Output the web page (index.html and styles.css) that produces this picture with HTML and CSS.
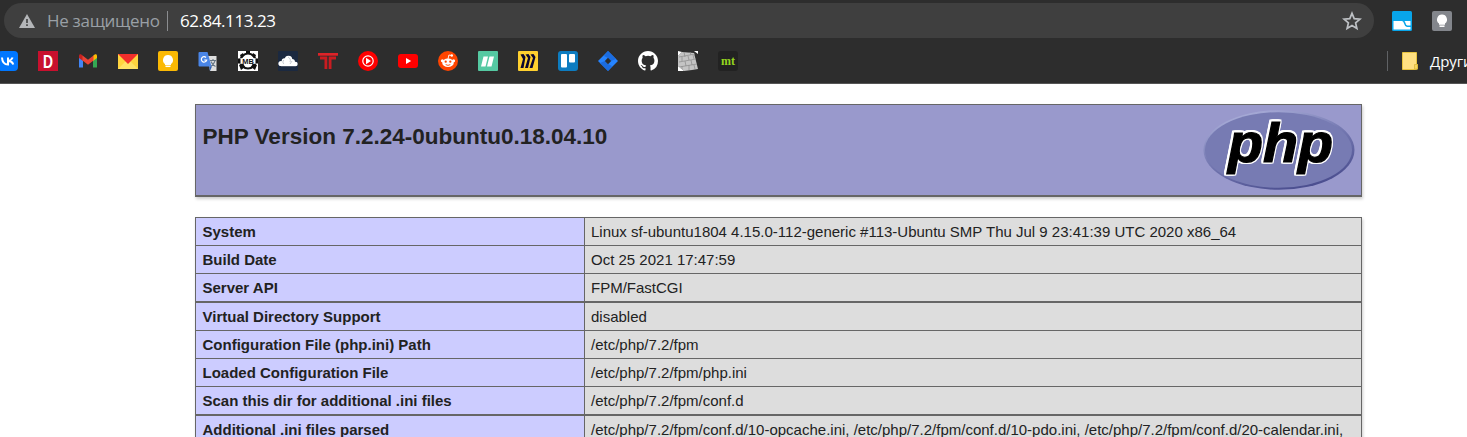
FILE: index.html
```html
<!DOCTYPE html>
<html lang="ru">
<head>
<meta charset="utf-8">
<title>phpinfo()</title>
<link rel="stylesheet" href="styles.css">
</head>
<body>
<header class="browser">
  <div class="toolbar">
    <div class="omnibox">
      <svg class="warn" width="16" height="14" viewBox="0 0 16 14"><path d="M8 0 16 14H0Z" fill="#b4b6b9"/><path d="M8 5v4M8 10.3v1.7" stroke="#3f3f3f" stroke-width="1.6"/></svg>
      <span class="insecure">Не защищено</span>
      <span class="divider"></span>
      <span class="address">62.84.113.23</span>
      <svg class="star" width="20" height="20" viewBox="0 0 20 20"><path d="M10 2.3 12.2 7.6 18 8.1 13.6 11.9 14.9 17.5 10 14.5 5.1 17.5 6.4 11.9 2 8.1 7.8 7.6Z" fill="none" stroke="#bdc0c4" stroke-width="1.7"/></svg>
    </div>
    <svg class="ext" width="20" height="20" viewBox="0 0 20 20"><rect width="20" height="20" rx="1.5" fill="#08a5ea"/><path d="M1.500 10H10q1.500 0 2 2.500t3 3.500h3.500v2.500h-17Z" fill="#fff"/><path d="M12.500 10h6v4.500h-3.200q-1.500-.5-1.800-2.500Z" fill="#fff"/></svg>
    <svg class="ext" width="20" height="20" viewBox="0 0 20 20"><rect width="20" height="20" rx="2" fill="#83868c"/><path d="M10 3.500a5 5 0 0 0-3 9v1.200h6v-1.200a5 5 0 0 0-3-9Z" fill="#fff"/><path d="M7.500 15.200h5" stroke="#fff" stroke-width="1.500"/></svg>
  </div>
  <div class="bookmarks">
    <svg width="20" height="20" viewBox="0 0 20 20"><rect width="20" height="20" rx="4" fill="#07f"/><path d="M4 6.500c.2 4.500 2.200 7 6 7v-7M10 10c2.300-.3 3.800-1.500 4.600-3.500M10.500 10c2.300 0 4 1.300 4.800 3.500" fill="none" stroke="#fff" stroke-width="2"/></svg>
    <svg width="20" height="20" viewBox="0 0 20 20"><rect width="20" height="20" fill="#c8102e"/><text x="10" y="16.800" class="letter-d" textLength="10" lengthAdjust="spacingAndGlyphs">D</text></svg>
    <svg width="20" height="20" viewBox="0 0 20 20"><path d="M1 6v10.500h4V9Z" fill="#4285f4"/><path d="M15 9v7.500h4V6Z" fill="#34a853"/><path d="M15 5v5l4-3V5c0-2-2-2.500-4 0Z" fill="#fbbc04"/><path d="M1 5v2l4 3V5C3 2.500 1 3 1 5Z" fill="#c5221f"/><path d="M4.500 4.500 10 8.700 15.500 4.500V9.600L10 13.800 4.500 9.600Z" fill="#ea4335"/></svg>
    <svg width="20" height="20" viewBox="0 0 20 20"><path d="M0 3h20v15H0Z" fill="#ffd43e"/><path d="M0 18 8 10h4l8 8Z" fill="#ffe266"/><path d="M0 3h20L10 13Z" fill="#f22f2b"/></svg>
    <svg width="20" height="20" viewBox="0 0 20 20"><rect width="20" height="20" rx="2" fill="#fbb904"/><path d="M10 4a5 5 0 0 0-3 9v1h6v-1a5 5 0 0 0-3-9Z" fill="#fff"/><path d="M7.500 15.300h5" stroke="#fff" stroke-width="1.500"/></svg>
    <svg width="20" height="20" viewBox="0 0 20 20"><path d="M9 5h9.500v15H12Z" fill="#dedede"/><path d="M12 9.500h6M15 8v1.500M17 10c-1 3-2.500 4.500-4.500 5.500M13 10.500c1 2.500 2.500 4 4.500 5" fill="none" stroke="#657584" stroke-width="1.100"/><path d="M1.500 1h8l4 14.500h-12a1 1 0 0 1-1-1V2a1 1 0 0 1 1-1Z" fill="#4a86e8"/><path d="M11 15.500h3L12 20Z" fill="#3163b7"/><path d="M8 6.500A2.700 2.700 0 1 0 8.700 9H6.200" fill="none" stroke="#fff" stroke-width="1.200"/></svg>
    <svg width="20" height="20" viewBox="0 0 20 20"><path d="M0 0h20v20H0Z" fill="#fff"/><circle cx="10" cy="10" r="7.500" fill="none" stroke="#111" stroke-width="2.200"/><path d="M8 0h4v3H8ZM1 14l4-2 2 4-4 3ZM19 14l-4-2-2 4 4 3ZM2 4l3-2 1 3-3 2ZM18 4l-3-2-1 3 3 2Z" fill="#111"/><path d="M2 7.200h16v5.600H2Z" fill="#fff"/><path d="M0 7.500h2.500v5H0ZM17.500 7.500H20v5h-2.500Z" fill="#111"/><text x="10" y="12.600" class="letter-mb" textLength="11.500" lengthAdjust="spacingAndGlyphs">MB</text></svg>
    <svg width="20" height="20" viewBox="0 0 20 20"><rect width="20" height="20" rx="1" fill="#1b2940"/><g fill="#fff"><circle cx="3" cy="12.500" r="2.600"/><circle cx="6.500" cy="10" r="2.800"/><circle cx="10.500" cy="8.500" r="3.800"/><circle cx="14" cy="11" r="3"/><circle cx="17.500" cy="13" r="2.200"/><path d="M3 11h14v4.200H3Z"/></g><path d="M6 9c-1.500 1-1.500 3 0 4M10 6c2 1 3 3 2 5M14 10l-2 3" fill="none" stroke="#adb4be" stroke-width=".7"/></svg>
    <svg width="20" height="20" viewBox="0 0 20 20"><path d="M0 2h20v2.500H0ZM2 5.500h7.300V18H6.500V8.500H2ZM10.700 5.500H18v3h-4.500V18h-2.800Z" fill="#c91c21"/><path d="M0 2h20v2.500H0Z" fill="#de2328"/></svg>
    <svg width="20" height="20" viewBox="0 0 20 20"><circle cx="10" cy="10" r="10" fill="#f00"/><circle cx="10" cy="10" r="5.200" fill="none" stroke="#fff" stroke-width="1.200"/><path d="m8 6.800 5 3.200-5 3.200Z" fill="#fff"/></svg>
    <svg width="20" height="20" viewBox="0 0 20 20"><rect y="3" width="20" height="14" rx="3" fill="#f00"/><path d="m8 7 5.200 3L8 13Z" fill="#fff"/></svg>
    <svg width="20" height="20" viewBox="0 0 20 20"><circle cx="10" cy="10" r="10" fill="#ff4500"/><g fill="#fff"><ellipse cx="10" cy="11.800" rx="5.800" ry="4.300"/><circle cx="4.400" cy="9.700" r="1.500"/><circle cx="15.600" cy="9.700" r="1.500"/><circle cx="13.800" cy="4.500" r="1.200"/></g><path d="m10 8 .9-4 3 .6" fill="none" stroke="#fff" stroke-width=".9"/><circle cx="7.700" cy="10.700" r="1.150" fill="#ff4500"/><circle cx="12.300" cy="10.700" r="1.150" fill="#ff4500"/><path d="M7.700 13.600q2.300 1.500 4.600 0" fill="none" stroke="#ff4500" stroke-width=".9"/></svg>
    <svg width="20" height="20" viewBox="0 0 20 20"><rect width="20" height="20" rx="1" fill="#55c9a2"/><path d="M5.500 5.500H10L7.500 15.500H3ZM11.500 5.500H16L13.500 15.500H9Z" fill="#fff"/></svg>
    <svg width="20" height="20" viewBox="0 0 20 20"><rect width="20" height="20" rx="1" fill="#ffd02f"/><path d="M2.500 3.500 5.500 3 7.500 6 5.500 17H2.500L5 8ZM7.500 3.500 10.500 3 12.500 6 10 17H7L10 7ZM12.500 3.500 15.500 3 17.500 6 14.500 17h-3L15 7Z" fill="#0b0731"/></svg>
    <svg width="20" height="20" viewBox="0 0 20 20"><rect width="20" height="20" rx="3" fill="#0d7cc0"/><rect x="3" y="3" width="6" height="13.500" rx="1" fill="#fff"/><rect x="11" y="3" width="6" height="8.500" rx="1" fill="#fff"/></svg>
    <svg width="20" height="20" viewBox="0 0 20 20"><path d="m10 0 10 10-10 10L0 10Z" fill="#2684ff"/><path d="m10 0-4 5 4 2 3 3 5-2ZM10 20l4-5-4-2-3-3-5 2Z" fill="#1b6ce0"/><path d="m10 6.800 3.200 3.200-3.200 3.200L6.800 10Z" fill="#2d2d2d"/></svg>
    <svg width="20" height="20" viewBox="0 0 16 16"><path fill="#fff" d="M8 0C3.580 0 0 3.580 0 8c0 3.540 2.290 6.530 5.470 7.590.4.070.55-.17.55-.38v-1.490c-2.010.37-2.530-.49-2.690-.94-.09-.23-.48-.94-.82-1.130-.28-.15-.68-.52-.01-.53.63-.01 1.080.58 1.230.82.72 1.210 1.870.87 2.330.66.07-.52.28-.87.51-1.070-1.780-.2-3.640-.89-3.640-3.950 0-.87.31-1.590.82-2.150-.08-.2-.36-1.020.08-2.120 0 0 .67-.21 2.200.82a7.600 7.600 0 0 1 4 0c1.530-1.040 2.200-.82 2.200-.82.44 1.100.16 1.920.08 2.120.51.560.82 1.270.82 2.150 0 3.070-1.870 3.750-3.650 3.950.29.250.54.730.54 1.480v2.200c0 .21.15.46.55.38A8.010 8.010 0 0 0 16 8c0-4.420-3.580-8-8-8Z"/></svg>
    <svg width="20" height="20" viewBox="0 0 20 20"><path d="M4 1 16 2l4 16-6 1-8 1-6-5V5Z" fill="#c4c4c4"/><path d="M1 6 17 3M1 11l17-3M1 16l18-3M6 1l1 5M12 1l1 3M4 6v4M10 5l1 4M15 4l1 4M7 10l1 5M13 9l1 5M4 15v4M11 14v5M16 14l1 4" stroke="#8a8a8a" stroke-width=".7"/><path d="m0 0 4 1-4 4ZM0 15l6 5H0ZM16 0h4v3Z" fill="#fff"/></svg>
    <svg width="20" height="20" viewBox="0 0 20 20"><rect width="20" height="20" rx="3" fill="#222"/><text x="10" y="14" class="letter-mt">mt</text></svg>
    <div class="other">
      <span class="separator"></span>
      <svg class="folder" width="16" height="18" viewBox="0 0 16 18"><path d="M.5.500h14v12h1V17L13 17.500H.5Z" fill="#ffe082" stroke="#e7c33f"/><path d="M12.500 17v-4.500h3V17Z" fill="#f8d75e" stroke="#d9b63b" stroke-width=".8"/></svg>
      <span class="other-label">Другие закладки</span>
    </div>
  </div>
</header>
<main class="page">
  <section class="banner">
    <h1>PHP Version 7.2.24-0ubuntu0.18.04.10</h1>
    <svg class="logo" width="152" height="82" viewBox="0 0 152 82">
      <defs>
        <linearGradient id="rim" x1="0.2" y1="0" x2="0.7" y2="1"><stop offset="0" stop-color="#aeb2dc"/><stop offset=".45" stop-color="#777bb3"/><stop offset="1" stop-color="#484b8d"/></linearGradient>
      </defs>
      <ellipse cx="76" cy="41" rx="75.500" ry="39.800" fill="url(#rim)"/>
      <ellipse cx="75.500" cy="41" rx="73.500" ry="37.800" fill="#777bb3"/>
      <text x="25" y="52.500" class="logo-text" textLength="105" lengthAdjust="spacingAndGlyphs"><tspan>php</tspan></text>
    </svg>
  </section>
  <section class="info">
    <dl><dt>System</dt><dd>Linux sf-ubuntu1804 4.15.0-112-generic #113-Ubuntu SMP Thu Jul 9 23:41:39 UTC 2020 x86_64</dd></dl>
    <dl><dt>Build Date</dt><dd>Oct 25 2021 17:47:59</dd></dl>
    <dl class="thick"><dt>Server API</dt><dd>FPM/FastCGI</dd></dl>
    <dl><dt>Virtual Directory Support</dt><dd>disabled</dd></dl>
    <dl><dt>Configuration File (php.ini) Path</dt><dd>/etc/php/7.2/fpm</dd></dl>
    <dl><dt>Loaded Configuration File</dt><dd>/etc/php/7.2/fpm/php.ini</dd></dl>
    <dl class="thick"><dt>Scan this dir for additional .ini files</dt><dd>/etc/php/7.2/fpm/conf.d</dd></dl>
    <dl><dt>Additional .ini files parsed</dt><dd>/etc/php/7.2/fpm/conf.d/10-opcache.ini, /etc/php/7.2/fpm/conf.d/10-pdo.ini, /etc/php/7.2/fpm/conf.d/20-calendar.ini,</dd></dl>
  </section>
</main>
</body>
</html>
```

FILE: styles.css
```css
* { box-sizing: border-box; }
body {
  margin: 0;
  height: 437px;
  overflow: hidden;
  background: #fff;
  color: #222;
  font-family: "Liberation Sans", Arial, sans-serif;
}
.browser {
  height: 84px;
  padding-top: 3px;
  background: #2d2d2d;
  border-bottom: 1px solid #555;
  overflow: hidden;
  font-family: "Open Sans", "Noto Sans", sans-serif;
}
.toolbar { display: flex; align-items: center; height: 35px; padding-left: 4px; }
.omnibox {
  display: flex;
  align-items: center;
  width: 1370px;
  height: 35px;
  padding: 0 12px 0 15px;
  border-radius: 18px;
  background: #3f3f3f;
  font-size: 17px;
  white-space: nowrap;
}
.insecure { width: 112px; margin-left: 12px; color: #9aa0a6; letter-spacing: -0.3px; }
.divider { width: 1px; height: 20px; margin: 0 12px 0 8px; background: #8b8d90; }
.address { color: #fff; letter-spacing: -0.45px; }
.star { margin-left: auto; }
.ext { margin-left: 18px; flex: none; }
.ext + .ext { margin-left: 20px; }
.bookmarks { display: flex; align-items: center; gap: 20px; height: 46px; margin-left: -2px; }
.bookmarks svg { flex: none; }
.other {
  display: flex;
  flex: none;
  align-items: center;
  margin-left: 629px;
  color: #fff;
  font-size: 15px;
  white-space: nowrap;
}
.other-label { letter-spacing: -0.1px; }
.separator { width: 1px; height: 20px; background: #606265; }
.folder { margin: 0 12px 0 14px; }
.letter-d { font: bold 19px "Liberation Sans", sans-serif; fill: #fff; text-anchor: middle; }
.letter-mb { font: bold 7px "Liberation Sans", sans-serif; fill: #111; text-anchor: middle; }
.letter-mt { font: bold 12px "Liberation Serif", serif; fill: #95d51e; text-anchor: middle; }
.page { width: 1167px; margin: 20px 0 0 195px; }
.banner {
  display: flex;
  justify-content: space-between;
  height: 93px;
  padding: 4px 6px 0 6.5px;
  border: 1px solid #666;
  border-bottom-width: 2px;
  background: #99c;
  box-shadow: 1px 2px 3px #ccc;
}
.banner h1 { margin: 15px 0 0; font-size: 22.5px; line-height: 26px; }
.logo-text {
  font: italic bold 55px "Liberation Sans", sans-serif;
  fill: #000;
  stroke: #000;
  stroke-width: 1.2px;
  filter: drop-shadow(1.3px 0 0 #fff) drop-shadow(-1.3px 0 0 #fff) drop-shadow(0 1.3px 0 #fff) drop-shadow(0 -1.3px 0 #fff);
}
.info { margin-top: 20px; border: 1px solid #666; border-bottom: 0; box-shadow: 1px 2px 3px #ccc; }
.info dl {
  display: grid;
  grid-template-columns: 389px 1fr;
  height: 28px;
  margin: 0;
  border-bottom: 1px solid #666;
  font-size: 15px;
  line-height: 27px;
  white-space: nowrap;
}
.info .thick { height: 29px; border-bottom-width: 2px; }
.info dt { padding-left: 6.5px; border-right: 1px solid #666; background: #ccf; font-weight: bold; }
.info dd { margin: 0; padding-left: 6px; background: #ddd; }
```
